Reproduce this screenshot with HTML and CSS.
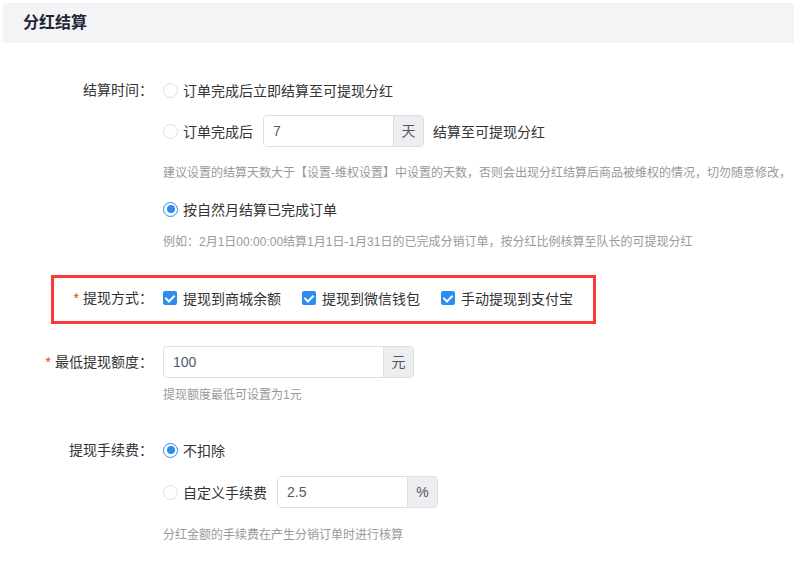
FILE: index.html
```html
<!DOCTYPE html>
<html lang="zh-CN">

<head>
    <meta charset="UTF-8" />
    <meta name="viewport" content="width=device-width, initial-scale=1.0" />
    <title>分红结算</title>
    <link rel="stylesheet" href="styles.css">
</head>

<body>
    <!-- 标题栏 -->
    <div class="panel-head">
        <h2>分红结算</h2>
    </div>

    <div class="form">
        <!-- 结算时间 -->
        <div class="form-item">
            <label class="label">结算时间：</label>
            <div class="field">
                <div class="line"><span class="radio"></span>订单完成后立即结算至可提现分红</div>
                <div class="line line-input">
                    <span class="radio"></span>订单完成后
                    <span class="input-group gap">
                        <span class="input w130">7</span><span class="addon">天</span>
                    </span>
                    <span class="after">结算至可提现分红</span>
                </div>
                <p class="hint hint-1">建议设置的结算天数大于【设置-维权设置】中设置的天数，否则会出现分红结算后商品被维权的情况，切勿随意修改，</p>
                <div class="line line-3"><span class="radio checked"></span>按自然月结算已完成订单</div>
                <p class="hint hint-2">例如：2月1日00:00:00结算1月1日-1月31日的已完成分销订单，按分红比例核算至队长的可提现分红</p>
            </div>
        </div>

        <!-- 提现方式 -->
        <div class="form-item boxed">
            <label class="label"><i class="req">*</i>提现方式：</label>
            <div class="field">
                <div class="line">
                    <span class="check-item"><span class="checkbox"></span>提现到商城余额</span>
                    <span class="check-item"><span class="checkbox"></span>提现到微信钱包</span>
                    <span class="check-item"><span class="checkbox"></span>手动提现到支付宝</span>
                </div>
            </div>
        </div>

        <!-- 最低提现额度 -->
        <div class="form-item item-min">
            <label class="label"><i class="req">*</i>最低提现额度：</label>
            <div class="field">
                <div class="line">
                    <span class="input-group">
                        <span class="input w220">100</span><span class="addon">元</span>
                    </span>
                </div>
                <p class="hint hint-min">提现额度最低可设置为1元</p>
            </div>
        </div>

        <!-- 提现手续费 -->
        <div class="form-item item-fee">
            <label class="label">提现手续费：</label>
            <div class="field">
                <div class="line"><span class="radio checked"></span>不扣除</div>
                <div class="line line-fee">
                    <span class="radio"></span>自定义手续费
                    <span class="input-group gap">
                        <span class="input w130">2.5</span><span class="addon">%</span>
                    </span>
                </div>
                <p class="hint hint-fee">分红金额的手续费在产生分销订单时进行核算</p>
            </div>
        </div>
    </div>
</body>

</html>
```

FILE: styles.css
```css
* {
    margin: 0;
    padding: 0;
    box-sizing: border-box;
}

html,
body {
    overflow: hidden;
}

body {
    font-family: "Liberation Sans", "Noto Sans CJK SC", sans-serif;
    font-size: 14px;
    color: #333;
    background: #fff;
}

.panel-head {
    margin: 3px 0 0 3px;
    height: 40px;
    padding-left: 20px;
    background: #f3f4f6;
    border-radius: 2px 0 0 2px;
}

.panel-head h2 {
    font-size: 16px;
    line-height: 40px;
    font-weight: bold;
    color: #1f2633;
}

.form {
    padding-top: 31px;
}

.form-item {
    display: flex;
    align-items: flex-start;
}

.form-item .label {
    width: 163px;
    flex-shrink: 0;
    padding-right: 10px;
    text-align: right;
    line-height: 32px;
    color: #333;
}

.req {
    font-style: normal;
    color: #ed4014;
    margin-right: 4px;
    font-family: "Liberation Sans", sans-serif;
}

.field {
    flex: 1;
    min-width: 0;
}

.line {
    display: flex;
    align-items: center;
    height: 32px;
    white-space: nowrap;
}

.line-input {
    margin-top: 9px;
}

.line-3 {
    margin-top: 10px;
}

.line-fee {
    margin-top: 10px;
}

.hint {
    font-size: 12px;
    line-height: 20px;
    color: #999;
    white-space: nowrap;
}

.hint-1 {
    margin-top: 16px;
}

.hint-2 {
    margin-top: 7px;
}

.hint-min {
    margin-top: 7px;
}

.hint-fee {
    margin-top: 17px;
}

/* 单选框 */
.radio {
    position: relative;
    width: 15px;
    height: 15px;
    margin-right: 5px;
    border: 1px solid #dcdee2;
    border-radius: 50%;
    background: #fff;
    flex-shrink: 0;
}

.radio.checked {
    border-color: #2d8cf0;
}

.radio.checked::after {
    content: "";
    position: absolute;
    left: 2.5px;
    top: 2.5px;
    width: 8px;
    height: 8px;
    border-radius: 50%;
    background: #2d8cf0;
}

/* 复选框 */
.check-item {
    display: inline-flex;
    align-items: center;
    margin-right: 21px;
}

.checkbox {
    position: relative;
    width: 14px;
    height: 14px;
    margin-right: 6px;
    border-radius: 2px;
    background: #2d8cf0;
}

.checkbox::after {
    content: "";
    position: absolute;
    left: 4px;
    top: 2px;
    width: 4px;
    height: 7px;
    border: 2px solid #fff;
    border-top: 0;
    border-left: 0;
    transform: rotate(45deg);
}

/* 输入框 */
.input-group {
    display: inline-flex;
    height: 32px;
    border: 1px solid #dcdee2;
    border-radius: 4px;
    overflow: hidden;
}

.input-group.gap {
    margin-left: 10px;
}

.input {
    height: 30px;
    line-height: 30px;
    padding-left: 9px;
    color: #515a6e;
    background: #fff;
}

.w130 {
    width: 129px;
}

.w220 {
    width: 219px;
}

.addon {
    width: 30px;
    height: 30px;
    line-height: 30px;
    text-align: center;
    background: #eceef1;
    border-left: 1px solid #dcdee2;
    color: #555;
}

.after {
    margin-left: 9px;
}

/* 红色标注框 */
.boxed {
    width: 545px;
    margin: 23px 0 0 51px;
    padding: 4px 0 7px;
    border: 3px solid #fa3a3a;
}

.boxed .label {
    width: 109px;
}

.item-min {
    margin-top: 22px;
}

.item-fee {
    margin-top: 29px;
}
```
